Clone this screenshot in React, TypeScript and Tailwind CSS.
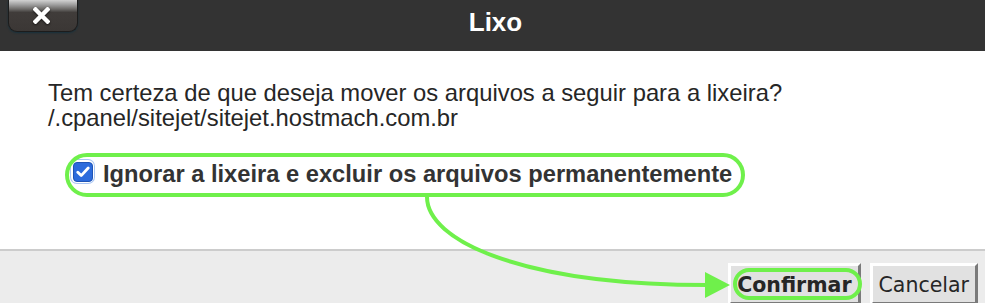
import React from 'react';

const green = '#6ff04b';

function CloseButton() {
  return (
    <button
      type="button"
      className="absolute left-[8px] top-0 flex h-[32px] w-[70px] items-center justify-center rounded-b-[9px] border border-t-0 border-[#1c1c1c] bg-[linear-gradient(180deg,#d2d2d2_0%,#a3a3a3_14%,#6a6866_30%,#403c3a_40%,#3b3735_100%)] shadow-[0_1px_2px_#16303c]"
    >
      <svg width="17" height="17" viewBox="0 0 17 17" className="-mt-[1px] -ml-[4px] drop-shadow-[0_1px_1px_rgba(0,0,0,0.6)]">
        <path d="M2.5 2.5 L14.5 14.5 M14.5 2.5 L2.5 14.5" stroke="#fff" strokeWidth="4.4" strokeLinecap="square" />
      </svg>
    </button>
  );
}

function CheckBox() {
  return (
    <span className="-mt-[2px] flex h-[23px] w-[23px] shrink-0 items-center justify-center rounded-[6px] ring-1 ring-[#a9c6f3]">
      <span className="flex h-[20px] w-[20px] items-center justify-center rounded-[4px] border border-[#1f54b5] bg-[#2c6bdc]">
        <svg width="14" height="12" viewBox="0 0 14 12">
          <path d="M1.8 6.2 L5.2 9.6 L12.2 2" fill="none" stroke="#fff" strokeWidth="2.8" strokeLinecap="round" strokeLinejoin="round" />
        </svg>
      </span>
    </span>
  );
}

export default function App() {
  return (
    <div className="relative h-[303px] w-[985px] overflow-hidden bg-white font-['Liberation_Sans',Arial,sans-serif]">
      <header className="relative flex h-[51px] items-center justify-center bg-[#333333] pb-[7px] pl-[6px]">
        <CloseButton />
        <h1 className="text-[26px] font-bold text-white">Lixo</h1>
      </header>

      <div className="h-[198px] pl-[48px] pt-[29px] text-[#262626]">
        <p className="text-[23.8px] leading-[25px]">
          Tem certeza de que deseja mover os arquivos a seguir para a lixeira?
          <br />
          /.cpanel/sitejet/sitejet.hostmach.com.br
        </p>
        <label className="ml-[23px] mt-[32px] flex items-start gap-[9px]">
          <CheckBox />
          <span className="text-[23.7px] font-bold leading-[25px] text-[#333]">
            Ignorar a lixeira e excluir os arquivos permanentemente
          </span>
        </label>
      </div>

      <footer className="flex h-[54px] justify-end gap-[9px] border-t-2 border-[#cccccc] bg-[#ececec] pr-[7px] pt-[12px] font-['DejaVu_Sans',Verdana,sans-serif]">
        <button
          type="button"
          className="h-[42px] border-[3px] border-b-[#7a7a7a] border-l-white border-r-[#7a7a7a] border-t-white bg-[#e1e1e1] px-[6px] pt-[2px] text-[20.5px] font-bold text-[#262626]"
        >
          Confirmar
        </button>
        <button
          type="button"
          className="h-[42px] border-[3px] border-b-[#7a7a7a] border-l-white border-r-[#7a7a7a] border-t-white bg-[#e1e1e1] px-[6px] pt-[2px] text-[20.5px] text-[#262626]"
        >
          Cancelar
        </button>
      </footer>

      {/* annotation overlay */}
      <svg className="pointer-events-none absolute inset-0" width="985" height="303" viewBox="0 0 985 303">
        <rect x="67" y="155" width="676" height="40" rx="20" fill="none" stroke={green} strokeWidth="4" />
        <rect x="735" y="270" width="125" height="28" rx="14" fill="none" stroke={green} strokeWidth="4" />
        <path d="M427 197 C 427 240, 520 285, 708 285" fill="none" stroke={green} strokeWidth="4" />
        <polygon points="705,272 730,285 705,298" fill={green} />
      </svg>
    </div>
  );
}
